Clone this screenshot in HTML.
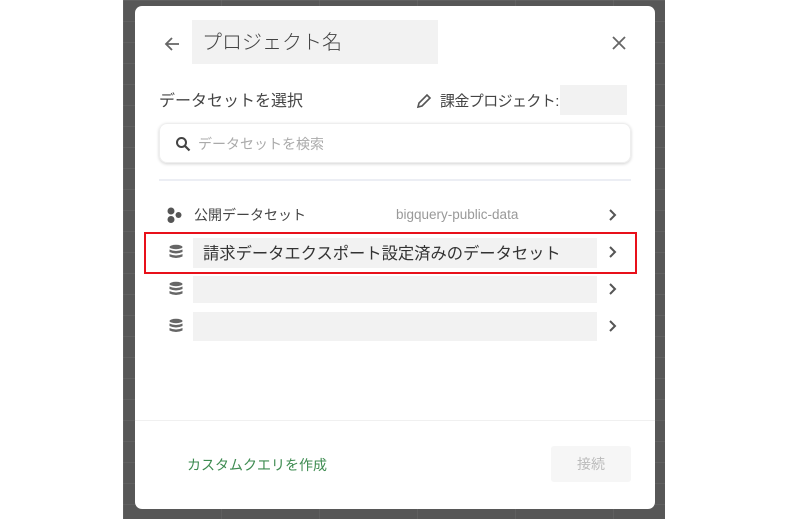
<!DOCTYPE html>
<html><head><meta charset="utf-8"><style>
*{margin:0;padding:0;box-sizing:border-box}
body{width:800px;height:522px;background:#fff;position:relative;overflow:hidden;font-family:"Liberation Sans","Noto Sans CJK JP",sans-serif;color:#333}
.bd{position:absolute;left:123px;top:0;width:542px;height:519px;background:#575757;
background-image:linear-gradient(90deg,rgba(255,255,255,.05) 1px,transparent 1px),linear-gradient(rgba(255,255,255,.05) 1px,transparent 1px);background-size:98px 100%,100% 21px}
.dlg{position:absolute;left:135px;top:6px;width:520px;height:503px;background:#fff;border-radius:7px}
.a{position:absolute}
.g{background:#f2f2f2}
</style></head><body>
<div class="bd"></div>
<div class="dlg"></div>
<svg class="a" style="left:163px;top:35px" width="18" height="18" viewBox="0 0 18 18"><path d="M16 9H3M9 3L3 9l6 6" stroke="#666" stroke-width="1.8" fill="none"/></svg>
<div class="a g" style="left:192px;top:20px;width:246px;height:44px"></div>
<div class="a" style="left:202px;top:30px;font-size:20px;line-height:26px;color:#444;font-weight:300">プロジェクト名</div>
<svg class="a" style="left:611px;top:35px" width="16" height="16" viewBox="0 0 16 16"><path d="M2 2l12 12M14 2L2 14" stroke="#666" stroke-width="1.8"/></svg>
<div class="a" style="left:159px;top:92px;font-size:16px;line-height:20px;color:#444">データセットを選択</div>
<svg class="a" style="left:416px;top:93px" width="16" height="16" viewBox="0 0 16 16"><path d="M2 14l1-4 8-8 3 3-8 8z" stroke="#555" stroke-width="1.6" fill="none"/></svg>
<div class="a" style="left:440px;top:92px;font-size:15px;line-height:20px;color:#444;letter-spacing:-0.6px">課金プロジェクト:</div>
<div class="a g" style="left:560px;top:85px;width:67px;height:30px"></div>
<div class="a" style="left:159px;top:123px;width:472px;height:40px;border-radius:8px;box-shadow:0 1px 3px rgba(0,0,0,.18);border:1px solid #eee"></div>
<svg class="a" style="left:175px;top:136px" width="16" height="16" viewBox="0 0 16 16"><circle cx="6.5" cy="6.5" r="4.5" stroke="#444" stroke-width="2" fill="none"/><path d="M10 10l4.5 4.5" stroke="#444" stroke-width="2.2"/></svg>
<div class="a" style="left:198px;top:135px;font-size:14px;line-height:18px;color:#aaa">データセットを検索</div>
<div class="a" style="left:159px;top:179px;width:472px;height:2px;background:#eceef4"></div>
<svg class="a" style="left:166px;top:206px" width="18" height="18" viewBox="0 0 18 18"><circle cx="5" cy="5" r="3.5" fill="#555"/><circle cx="12.5" cy="9" r="3" fill="#555"/><circle cx="5" cy="13.5" r="3.5" fill="#555"/></svg>
<div class="a" style="left:194px;top:206px;font-size:14px;line-height:18px;color:#444">公開データセット</div>
<div class="a" style="left:396px;top:207px;font-size:13.5px;line-height:16px;color:#999">bigquery-public-data</div>
<div class="a g" style="left:193px;top:238px;width:404px;height:30px"></div>
<div class="a g" style="left:193px;top:276px;width:404px;height:27px"></div>
<div class="a g" style="left:193px;top:312px;width:404px;height:29px"></div>
<div class="a" style="left:203px;top:243px;font-size:16.3px;line-height:22px;color:#333">請求データエクスポート設定済みのデータセット</div>
<div class="a" style="left:144px;top:232px;width:493px;height:42px;border:2.5px solid #e8101a"></div>
<svg class="a" style="left:168px;top:245px;overflow:visible" width="16" height="70" viewBox="0 0 16 70">
<g fill="#666"><ellipse cx="8" cy="2" rx="6.5" ry="2.2"/><path d="M1.5 4.5q6.5 3 13 0v2.5q-6.5 3-13 0z"/><path d="M1.5 9q6.5 3 13 0v2.5q-6.5 3-13 0z"/></g>
<g fill="#666" transform="translate(0,37)"><ellipse cx="8" cy="2" rx="6.5" ry="2.2"/><path d="M1.5 4.5q6.5 3 13 0v2.5q-6.5 3-13 0z"/><path d="M1.5 9q6.5 3 13 0v2.5q-6.5 3-13 0z"/></g>
<g fill="#666" transform="translate(0,74)"><ellipse cx="8" cy="2" rx="6.5" ry="2.2"/><path d="M1.5 4.5q6.5 3 13 0v2.5q-6.5 3-13 0z"/><path d="M1.5 9q6.5 3 13 0v2.5q-6.5 3-13 0z"/></g>
</svg>
<svg class="a" style="left:608px;top:208px;overflow:visible" width="10" height="130" viewBox="0 0 10 130"><g stroke="#555" stroke-width="2" fill="none"><path d="M2 2l5 5-5 5"/><path d="M2 39l5 5-5 5"/><path d="M2 76l5 5-5 5"/><path d="M2 113l5 5-5 5"/></g></svg>
<div class="a" style="left:135px;top:420px;width:520px;height:1px;background:#f0f0f0"></div>
<div class="a" style="left:187px;top:456px;font-size:14px;line-height:18px;color:#3d8b50">カスタムクエリを作成</div>
<div class="a" style="left:551px;top:446px;width:80px;height:36px;background:#f6f6f6;border-radius:3px;font-size:14px;line-height:36px;text-align:center;color:#bbb">接続</div>
</body></html>
